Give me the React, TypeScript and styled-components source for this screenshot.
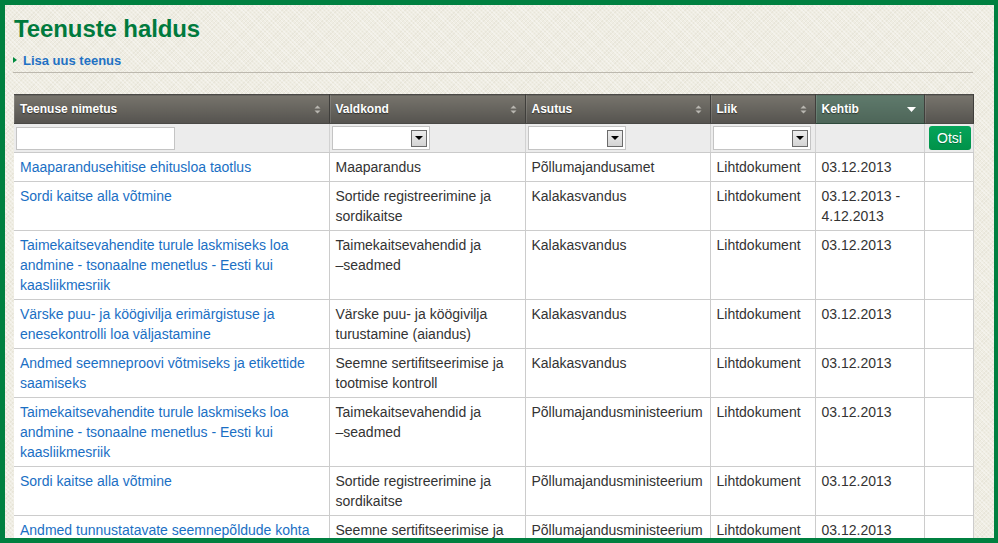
import React from 'react';
import styled, { createGlobalStyle } from 'styled-components';

const GlobalStyle = createGlobalStyle`
    html, body {
        margin: 0;
        padding: 0;
        background: #008040;
        font-family: "Liberation Sans", Arial, sans-serif;
    }
`

type Row = {
    name: string
    field: string
    agency: string
    kind: string
    valid: string
}

const rows: Row[] = [
    { name: 'Maaparandusehitise ehitusloa taotlus', field: 'Maaparandus', agency: 'Põllumajandusamet', kind: 'Lihtdokument', valid: '03.12.2013' },
    { name: 'Sordi kaitse alla võtmine', field: 'Sortide registreerimine ja sordikaitse', agency: 'Kalakasvandus', kind: 'Lihtdokument', valid: '03.12.2013 - 4.12.2013' },
    { name: 'Taimekaitsevahendite turule laskmiseks loa andmine - tsonaalne menetlus - Eesti kui kaasliikmesriik', field: 'Taimekaitsevahendid ja \u2013\u2060seadmed', agency: 'Kalakasvandus', kind: 'Lihtdokument', valid: '03.12.2013' },
    { name: 'Värske puu- ja köögivilja erimärgistuse ja enesekontrolli loa väljastamine', field: 'Värske puu- ja köögivilja turustamine (aiandus)', agency: 'Kalakasvandus', kind: 'Lihtdokument', valid: '03.12.2013' },
    { name: 'Andmed seemneproovi võtmiseks ja etikettide saamiseks', field: 'Seemne sertifitseerimise ja tootmise kontroll', agency: 'Kalakasvandus', kind: 'Lihtdokument', valid: '03.12.2013' },
    { name: 'Taimekaitsevahendite turule laskmiseks loa andmine - tsonaalne menetlus - Eesti kui kaasliikmesriik', field: 'Taimekaitsevahendid ja \u2013\u2060seadmed', agency: 'Põllumajandusministeerium', kind: 'Lihtdokument', valid: '03.12.2013' },
    { name: 'Sordi kaitse alla võtmine', field: 'Sortide registreerimine ja sordikaitse', agency: 'Põllumajandusministeerium', kind: 'Lihtdokument', valid: '03.12.2013' },
    { name: 'Andmed tunnustatavate seemnepõldude kohta', field: 'Seemne sertifitseerimise ja tootmise kontroll', agency: 'Põllumajandusministeerium', kind: 'Lihtdokument', valid: '03.12.2013' },
]

const columns = [
    { title: 'Teenuse nimetus', width: 315 },
    { title: 'Valdkond', width: 196 },
    { title: 'Asutus', width: 185 },
    { title: 'Liik', width: 105 },
    { title: 'Kehtib', width: 109, active: true },
    { title: '', width: 49 },
]

const SortIcon = () => (
    <svg width="7" height="9" viewBox="0 0 7 9">
        <path d="M3.5 0.5 L6.5 3.5 L0.5 3.5 Z" fill="#b9b7b1" />
        <path d="M3.5 8.5 L6.5 5.5 L0.5 5.5 Z" fill="#b9b7b1" />
    </svg>
)

const DownIcon = () => (
    <svg width="9" height="5" viewBox="0 0 9 5">
        <path d="M0 0 L9 0 L4.5 5 Z" fill="#ffffff" />
    </svg>
)

const Select = () => (
    <StyledSelect>
        <span className="btn">
            <svg width="8" height="4" viewBox="0 0 8 4">
                <path d="M0 0 L8 0 L4 4 Z" fill="#000" />
            </svg>
        </span>
    </StyledSelect>
)

const App = () => {
    return (
        <StyledFrame>
            <GlobalStyle />
            <StyledPage>
                <StyledTitle>Teenuste haldus</StyledTitle>
                <StyledAddLink href="#">Lisa uus teenus</StyledAddLink>
                <StyledRule />
                <StyledTable>
                    <colgroup>
                        {columns.map((c, idx) => <col key={idx} style={{ width: c.width }} />)}
                    </colgroup>
                    <thead>
                        <tr>
                            {columns.map((c, idx) => (
                                <StyledTh key={idx} $active={!!c.active}>
                                    <div className="inner">
                                        <span>{c.title}</span>
                                        {c.title && (c.active ? <DownIcon /> : <SortIcon />)}
                                    </div>
                                </StyledTh>
                            ))}
                        </tr>
                        <StyledFilterRow>
                            <td><StyledInput /></td>
                            <td><Select /></td>
                            <td><Select /></td>
                            <td><Select /></td>
                            <td></td>
                            <td><StyledButton>Otsi</StyledButton></td>
                        </StyledFilterRow>
                    </thead>
                    <tbody>
                        {rows.map((r, idx) => (
                            <StyledRow key={idx}>
                                <td><a href="#">{r.name}</a></td>
                                <td>{r.field}</td>
                                <td>{r.agency}</td>
                                <td>{r.kind}</td>
                                <td>{r.valid}</td>
                                <td></td>
                            </StyledRow>
                        ))}
                    </tbody>
                </StyledTable>
            </StyledPage>
        </StyledFrame>
    )
}

const StyledFrame = styled.div`
    width: 998px;
    height: 543px;
    box-sizing: border-box;
    padding: 5px 4px 5px 5px;
    background: #008040;
    overflow: hidden;
`

const StyledPage = styled.div`
    height: 100%;
    box-sizing: border-box;
    padding: 10px 21px 0 8px;
    overflow: hidden;
    background-color: #efede3;
    background-image:
        repeating-linear-gradient(45deg, rgba(255,255,255,0.35) 0 1px, transparent 1px 3px),
        repeating-linear-gradient(-45deg, rgba(200,195,175,0.18) 0 1px, transparent 1px 3px);
`

const StyledTitle = styled.h1`
    margin: 0 0 0 1px;
    font-size: 24px;
    line-height: 28px;
    font-weight: bold;
    letter-spacing: -0.1px;
    color: #007a3d;
`

const StyledAddLink = styled.a`
    display: block;
    margin-top: 9px;
    padding-left: 10px;
    position: relative;
    font-size: 13px;
    line-height: 18px;
    font-weight: bold;
    color: #1f72c4;
    text-decoration: none;
    &::before {
        content: '';
        position: absolute;
        left: 0;
        top: 5px;
        border-left: 4px solid #008a3e;
        border-top: 3.5px solid transparent;
        border-bottom: 3.5px solid transparent;
    }
`

const StyledRule = styled.div`
    margin-top: 2px;
    height: 1px;
    background: #bcb8ae;
`

const StyledTable = styled.table`
    margin: 21px 0 0 1px;
    width: 959px;
    table-layout: fixed;
    border-collapse: collapse;
    font-size: 14px;
    line-height: 20px;
    color: #333;
`

const StyledTh = styled.th<{ $active: boolean }>`
    height: 28px;
    padding: 0;
    text-align: left;
    font-size: 12px;
    font-weight: bold;
    color: #fff;
    text-shadow: 0 1px 1px rgba(0, 0, 0, 0.5);
    border-top: 1px solid #4a4946;
    border-right: 1px solid #3f3e3b;
    background: ${p => p.$active
        ? 'linear-gradient(#5f7a6c, #4d6558)'
        : 'linear-gradient(#77746c, #55534f)'};
    box-shadow: inset 1px 0 0 rgba(255, 255, 255, 0.12);
    border-bottom: 1px solid ${p => p.$active ? '#2e4a3c' : '#4a4946'};
    .inner {
        display: flex;
        align-items: center;
        justify-content: space-between;
        padding: 0 8px 0 6px;
    }
    svg {
        flex: none;
    }
`

const StyledFilterRow = styled.tr`
    background: #ececec;
    td {
        height: 28px;
        padding: 0 2px;
        border-right: 1px solid #d2d2d2;
        border-bottom: 1px solid #cacaca;
        vertical-align: middle;
    }
`

const StyledInput = styled.input`
    display: block;
    width: 159px;
    height: 23px;
    box-sizing: border-box;
    border: 1px solid #c4c4c4;
    background: #fff;
    padding: 0 3px;
`

const StyledSelect = styled.div`
    width: 98px;
    height: 24px;
    box-sizing: border-box;
    border: 1px solid #c4c4c4;
    background: #fff;
    display: flex;
    align-items: center;
    justify-content: flex-end;
    padding-right: 2px;
    .btn {
        width: 16px;
        height: 17px;
        box-sizing: border-box;
        border: 1px solid #6b6b6b;
        background: linear-gradient(#ececec, #d4d4d4);
        display: flex;
        align-items: center;
        justify-content: center;
    }
`

const StyledButton = styled.button`
    display: block;
    margin-left: 2px;
    width: 42px;
    height: 24px;
    border: none;
    border-radius: 3px;
    background: linear-gradient(#05a45a, #009249);
    color: #fff;
    font-family: "Liberation Sans", Arial, sans-serif;
    font-size: 14px;
    text-shadow: 0 1px 0 rgba(0, 0, 0, 0.25);
    padding: 0;
`

const StyledRow = styled.tr`
    background: #fff;
    td {
        padding: 4px 6px 4px 6px;
        vertical-align: top;
        border-right: 1px solid #cccccc;
        border-bottom: 1px solid #cccccc;
        word-wrap: break-word;
    }
    a {
        color: #1a6fc4;
        text-decoration: none;
    }
`

export default App
